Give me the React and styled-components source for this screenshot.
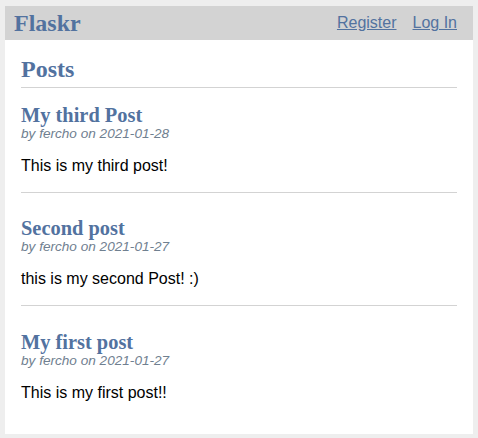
import React from 'react';
import styled, { createGlobalStyle } from 'styled-components';

const posts = [
  { id: 3, title: 'My third Post', author: 'fercho', date: '2021-01-28', body: 'This is my third post!' },
  { id: 2, title: 'Second post', author: 'fercho', date: '2021-01-27', body: 'this is my second Post! :)' },
  { id: 1, title: 'My first post', author: 'fercho', date: '2021-01-27', body: 'This is my first post!!' },
];

function App() {
  return (
    <>
      <GlobalStyle />
      <Page>
        <Body>
          <Nav>
            <Brand><a href="#">Flaskr</a></Brand>
            <NavList>
              <li><NavLink href="#">Register</NavLink></li>
              <li><NavLink href="#">Log In</NavLink></li>
            </NavList>
          </Nav>
          <Content>
            <Header>
              <PageTitle>Posts</PageTitle>
            </Header>
            {posts.map((post, i) => (
              <React.Fragment key={post.id}>
                <Post>
                  <PostHeader>
                    <div>
                      <PostTitle>{post.title}</PostTitle>
                      <About>by {post.author} on {post.date}</About>
                    </div>
                  </PostHeader>
                  <PostBody>{post.body}</PostBody>
                </Post>
                {i < posts.length - 1 && <Rule />}
              </React.Fragment>
            ))}
          </Content>
        </Body>
      </Page>
    </>
  );
}

export default App;

const GlobalStyle = createGlobalStyle`
  html {
    background: #eeeeee;
  }
  body {
    margin: 0;
    font-family: "Liberation Sans", Arial, sans-serif;
    font-size: 16px;
  }
`;

const Page = styled.div`
  padding: 6px 5px 4px;
`;

const Body = styled.div`
  background: #fff;
`;

const Nav = styled.nav`
  background: lightgray;
  display: flex;
  align-items: center;
  padding: 0 8px;
`;

const Brand = styled.h1`
  flex: auto;
  margin: 0 0 0 1px;
  font-family: "Liberation Serif", "Times New Roman", serif;
  font-size: 24px;

  a {
    color: #52729f;
    text-decoration: none;
  }
`;

const NavList = styled.ul`
  display: flex;
  list-style: none;
  margin: 0;
  padding: 0;
`;

const NavLink = styled.a`
  display: block;
  padding: 8px;
  color: #52729f;
`;

const Content = styled.section`
  padding: 0 16px 15px;
`;

const Header = styled.header`
  border-bottom: 1px solid lightgray;
  display: flex;
  align-items: flex-end;
`;

const PageTitle = styled.h1`
  flex: auto;
  margin: 16px 0 4px;
  font-family: "Liberation Serif", "Times New Roman", serif;
  font-size: 24px;
  color: #52729f;
`;

const Post = styled.article``;

const PostHeader = styled.header`
  display: flex;
  align-items: flex-end;
  font-size: 0.85em;

  & > div:first-of-type {
    flex: auto;
  }
`;

const PostTitle = styled.h1`
  font-family: "Liberation Serif", "Times New Roman", serif;
  font-size: 1.5em;
  line-height: 21px;
  margin: 16.5px 0 0;
  color: #52729f;
`;

const About = styled.div`
  color: slategray;
  font-style: italic;
`;

const PostBody = styled.p`
  white-space: pre-line;
  margin: 16px 0 17px;
`;

const Rule = styled.hr`
  border: none;
  border-top: 1px solid lightgray;
  margin: 8px 0 9px;
`;
